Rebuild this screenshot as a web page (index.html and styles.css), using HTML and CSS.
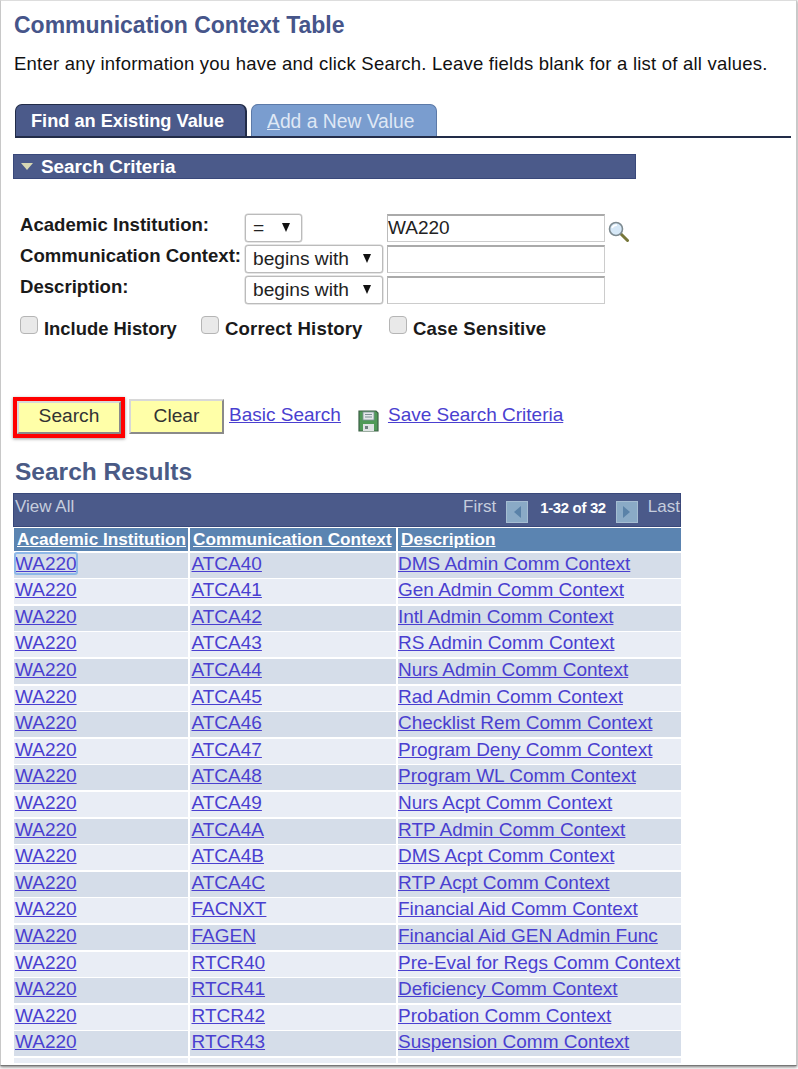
FILE: index.html
```html
<!DOCTYPE html>
<html lang="en">
<head>
<meta charset="utf-8">
<title>Communication Context Table</title>
<link rel="stylesheet" href="styles.css">
</head>
<body>
<main class="frame">
  <h1 class="title">Communication Context Table</h1>
  <p class="intro">Enter any information you have and click Search. Leave fields blank for a list of all values.</p>
  <nav class="tabs">
    <a class="tab tab-active">Find an Existing Value</a>
    <a class="tab tab-idle"><u>A</u>dd a New Value</a>
  </nav>
  <div class="section-bar"><span class="tri"></span>Search Criteria</div>
  <form class="criteria">
    <label class="field-label">Academic Institution:</label>
    <div class="select select-short"><span>=</span><i class="arrow"></i></div>
    <div class="input-wrap"><input class="text" value="WA220">
      <svg class="lens" viewBox="0 0 21 21" width="21" height="21"><path d="M13 13l6.500 6.500" stroke="#77773a" stroke-width="3" stroke-linecap="round"/><circle cx="8" cy="8" r="6.500" fill="#d6e8f7" stroke="#7d8a90" stroke-width="1.600"/><path d="M4 7c1-2 3-3 5-3" stroke="#fff" stroke-width="1.500" fill="none"/></svg>
    </div>
    <label class="field-label">Communication Context:</label>
    <div class="select"><span>begins with</span><i class="arrow"></i></div>
    <div class="input-wrap"><input class="text"></div>
    <label class="field-label">Description:</label>
    <div class="select"><span>begins with</span><i class="arrow"></i></div>
    <div class="input-wrap"><input class="text"></div>
  </form>
  <div class="checks">
    <label class="check c1"><input type="checkbox">Include History</label>
    <label class="check c2"><input type="checkbox">Correct History</label>
    <label class="check c3"><input type="checkbox">Case Sensitive</label>
  </div>
  <div class="actions">
    <span class="highlight"><button type="button" class="btn btn-search">Search</button></span>
    <button type="button" class="btn btn-clear">Clear</button>
    <a class="link basic" href="#">Basic Search</a>
    <svg class="save" viewBox="0 0 21 22" width="21" height="22"><path d="M1 1h17l2 2v18H1z" fill="#4f9a57" stroke="#3b5f45" stroke-width="1.200"/><rect x="5" y="2" width="11" height="8" fill="#e3e8ea" stroke="#7d8f96" stroke-width=".8"/><path d="M7 4.500h7M7 7h7" stroke="#7d8f96"/><rect x="5" y="14" width="11" height="7" fill="#dfe4e4"/><rect x="7" y="16" width="3" height="3" fill="#6f7f7f"/></svg>
    <a class="link save-link" href="#">Save Search Criteria</a>
  </div>
  <h2 class="results-title">Search Results</h2>
  <section class="grid-wrap">
    <div class="toolbar">
      <span class="view-all">View All</span>
      <span class="pager">
        <span class="pg-first">First</span>
        <span class="pg-btn"><i class="pg-left"></i></span>
        <b class="pg-count">1-32 of 32</b>
        <span class="pg-btn"><i class="pg-right"></i></span>
        <span class="pg-last">Last</span>
      </span>
    </div>
    <div class="grid">
      <a class="th">Academic Institution</a><a class="th">Communication Context</a><a class="th">Description</a>
      <div class="td odd"><a class="focus">WA220</a></div><div class="td odd"><a>ATCA40</a></div><div class="td odd"><a>DMS Admin Comm Context</a></div>
      <div class="td"><a>WA220</a></div><div class="td"><a>ATCA41</a></div><div class="td"><a>Gen Admin Comm Context</a></div>
      <div class="td odd"><a>WA220</a></div><div class="td odd"><a>ATCA42</a></div><div class="td odd"><a>Intl Admin Comm Context</a></div>
      <div class="td"><a>WA220</a></div><div class="td"><a>ATCA43</a></div><div class="td"><a>RS Admin Comm Context</a></div>
      <div class="td odd"><a>WA220</a></div><div class="td odd"><a>ATCA44</a></div><div class="td odd"><a>Nurs Admin Comm Context</a></div>
      <div class="td"><a>WA220</a></div><div class="td"><a>ATCA45</a></div><div class="td"><a>Rad Admin Comm Context</a></div>
      <div class="td odd"><a>WA220</a></div><div class="td odd"><a>ATCA46</a></div><div class="td odd"><a>Checklist Rem Comm Context</a></div>
      <div class="td"><a>WA220</a></div><div class="td"><a>ATCA47</a></div><div class="td"><a>Program Deny Comm Context</a></div>
      <div class="td odd"><a>WA220</a></div><div class="td odd"><a>ATCA48</a></div><div class="td odd"><a>Program WL Comm Context</a></div>
      <div class="td"><a>WA220</a></div><div class="td"><a>ATCA49</a></div><div class="td"><a>Nurs Acpt Comm Context</a></div>
      <div class="td odd"><a>WA220</a></div><div class="td odd"><a>ATCA4A</a></div><div class="td odd"><a>RTP Admin Comm Context</a></div>
      <div class="td"><a>WA220</a></div><div class="td"><a>ATCA4B</a></div><div class="td"><a>DMS Acpt Comm Context</a></div>
      <div class="td odd"><a>WA220</a></div><div class="td odd"><a>ATCA4C</a></div><div class="td odd"><a>RTP Acpt Comm Context</a></div>
      <div class="td"><a>WA220</a></div><div class="td"><a>FACNXT</a></div><div class="td"><a>Financial Aid Comm Context</a></div>
      <div class="td odd"><a>WA220</a></div><div class="td odd"><a>FAGEN</a></div><div class="td odd"><a>Financial Aid GEN Admin Func</a></div>
      <div class="td"><a>WA220</a></div><div class="td"><a>RTCR40</a></div><div class="td"><a>Pre-Eval for Regs Comm Context</a></div>
      <div class="td odd"><a>WA220</a></div><div class="td odd"><a>RTCR41</a></div><div class="td odd"><a>Deficiency Comm Context</a></div>
      <div class="td"><a>WA220</a></div><div class="td"><a>RTCR42</a></div><div class="td"><a>Probation Comm Context</a></div>
      <div class="td odd"><a>WA220</a></div><div class="td odd"><a>RTCR43</a></div><div class="td odd"><a>Suspension Comm Context</a></div>
      <div class="td stub"></div><div class="td stub"></div><div class="td stub"></div>
    </div>
  </section>
</main>
</body>
</html>
```
FILE: styles.css
```css
* { box-sizing: border-box; }
html, body { margin: 0; padding: 0; background: #fff; }
body { font-family: "Liberation Sans", Arial, sans-serif; height: 1069px; overflow: hidden; color: #111; }
a { cursor: pointer; }

.frame {
  width: 797px; height: 1066px; padding: 0 0 0 12px;
  border: 1px solid #c8c8c8; border-bottom: 1px solid #777; border-top-color: #ddd;
  box-shadow: 0 1px 3px rgba(0,0,0,.55);
  overflow: hidden; background: #fff;
}
.title { margin: 11px 0 0 1px; font-size: 23px; line-height: 26px; font-weight: bold; color: #46558a; }
.intro { margin: 15px 0 0 1px; font-size: 18.500px; letter-spacing: .22px; line-height: 22px; color: #111; white-space: nowrap; }

.tabs { display: flex; gap: 4px; margin: 29px 0 0 2px; height: 34px; width: 776px; border-bottom: 2px solid #222c48; align-items: flex-end; }
.tab { display: block; height: 32px; border-radius: 7px 7px 0 0; line-height: 33px; white-space: nowrap; }
.tab-active { width: 232px; padding-left: 15px; background: #4b5a8a; color: #fff; font-weight: bold; font-size: 18.200px; border: 1px solid #222c48; border-bottom: 0; border-right-width: 2px; }
.tab-idle { width: 186px; padding-left: 15px; background: #7a9dcf; color: #dfe8f5; font-size: 19.300px; border: 1px solid #5c7aa8; border-bottom: 0; }

.section-bar { margin: 16px 0 0 0; width: 623px; height: 25px; background: #4b5a8a; border: 1px solid #39487a; color: #fff; font-weight: bold; font-size: 18.900px; line-height: 23px; display: flex; align-items: center; padding-left: 7px; }
.tri { width: 0; height: 0; border-left: 6px solid transparent; border-right: 6px solid transparent; border-top: 7px solid #d8d8b4; margin-right: 8px; }

.criteria { display: grid; grid-template-columns: 225px 142px 1fr; grid-auto-rows: 27.500px; row-gap: 3.500px; margin: 35px 0 0 7px; }
.field-label { font-size: 18.600px; font-weight: bold; line-height: 21px; color: #1a1a1a; white-space: nowrap; }
.select { height: 27.500px; width: 138px; border: 1px solid #bbb; border-radius: 3px; background: #fff; box-shadow: 0 0 0 .5px #ccc; display: flex; align-items: center; justify-content: space-between; padding: 0 11px 0 7px; font-size: 19.200px; color: #222; }
.select-short { width: 57px; }
.arrow { width: 0; height: 0; border-left: 4.500px solid transparent; border-right: 4.500px solid transparent; border-top: 9px solid #111; }
.input-wrap { display: flex; align-items: flex-end; }
.text { width: 218px; height: 27.500px; padding: 0; border: 1px solid #ccc; border-top: 2px solid #aaa; border-left-color: #bbb; background: #fff; font: 19px "Liberation Sans", Arial, sans-serif; color: #222; outline: 0; }
.lens { margin-left: 3px; }

.checks { display: flex; margin: 12px 0 0 7px; height: 24px; }
.check { display: flex; align-items: flex-start; font-size: 18.600px; letter-spacing: .15px; font-weight: bold; line-height: 26px; color: #1a1a1a; white-space: nowrap; }
.check input { appearance: none; width: 18px; height: 18px; margin: 0 6px 0 0; border: 1px solid #b5b5b5; border-radius: 4px; background: #e9e9e9; }
.c1 { width: 181px; letter-spacing: 0; font-size: 18.400px; } .c2 { width: 188px; }

.actions { display: flex; align-items: flex-start; margin: 57px 0 0 0; height: 41px; position: relative; }
.highlight { display: block; width: 112px; height: 41px; border: 4px solid #f00; box-shadow: 0 1px 3px rgba(0,0,0,.4); }
.btn { display: block; height: 100%; width: 100%; background: #ffffa8; border: 2px solid; border-color: #d8d8d8 #8a8a8a #8a8a8a #d8d8d8; padding: 0 0 3px; font: 19.200px "Liberation Sans", Arial, sans-serif; color: #333; }
.btn-clear { width: 95px; height: 35px; margin: 2px 0 0 4px; padding: 0; }
.link { color: #4a3fd0; text-decoration: underline; font-size: 19px; line-height: 22px; white-space: nowrap; }
.basic { margin: 7.500px 0 0 5px; }
.save { margin: 13.500px 0 0 17px; }
.save-link { margin: 7.500px 0 0 9px; }

.results-title { margin: 20.500px 0 0 2px; font-size: 24.500px; line-height: 28px; font-weight: bold; color: #4a5a85; }

.grid-wrap { width: 668px; margin-top: 7px; }
.toolbar { height: 34px; background: #4b5a8a; border: 1px solid #39487a; color: #c6cddd; font-size: 17px; display: flex; justify-content: space-between; padding: 4px 0 0 1px; line-height: 18px; }
.pager { display: flex; align-items: flex-start; }
.pg-btn { width: 22px; height: 22px; margin-top: 3px; background: #8aaac6; border: 1px solid #a5bdd2; display: flex; align-items: center; justify-content: center; }
.pg-left { border-top: 6px solid transparent; border-bottom: 6px solid transparent; border-right: 7px solid #5a82a8; }
.pg-right { border-top: 6px solid transparent; border-bottom: 6px solid transparent; border-left: 7px solid #5a82a8; }
.pg-first { margin-right: 10px; }
.pg-count { margin: 1px 10px 0 12px; font-size: 14.900px; color: #fff; letter-spacing: -.3px; }
.pg-last { margin-left: 10px; }

.grid { display: grid; grid-template-columns: 174px 206px 283px; grid-template-rows: 23px; column-gap: 2px; row-gap: 1.600px; grid-auto-rows: 25px; margin: 1px 0 0 1px; width: 667px; }
.th { background: #5b84b1; color: #fff; font-weight: bold; font-size: 17.200px; line-height: 22px; text-decoration: underline; padding-left: 3px; white-space: nowrap; }
.td { background: #e9edf5; font-size: 19px; line-height: 22px; padding-left: 1.500px; white-space: nowrap; }
.td:nth-child(3n+1) { padding-left: 1px; }
.td:nth-child(3n) { padding-left: 0; }
.td.odd { background: #d5dde9; }
.td a { color: #4a3fd0; text-decoration: underline; }
.focus { outline: 2px solid #8db8e8; outline-offset: -1px; border-radius: 2px; }
.stub { height: 5px; }
```
